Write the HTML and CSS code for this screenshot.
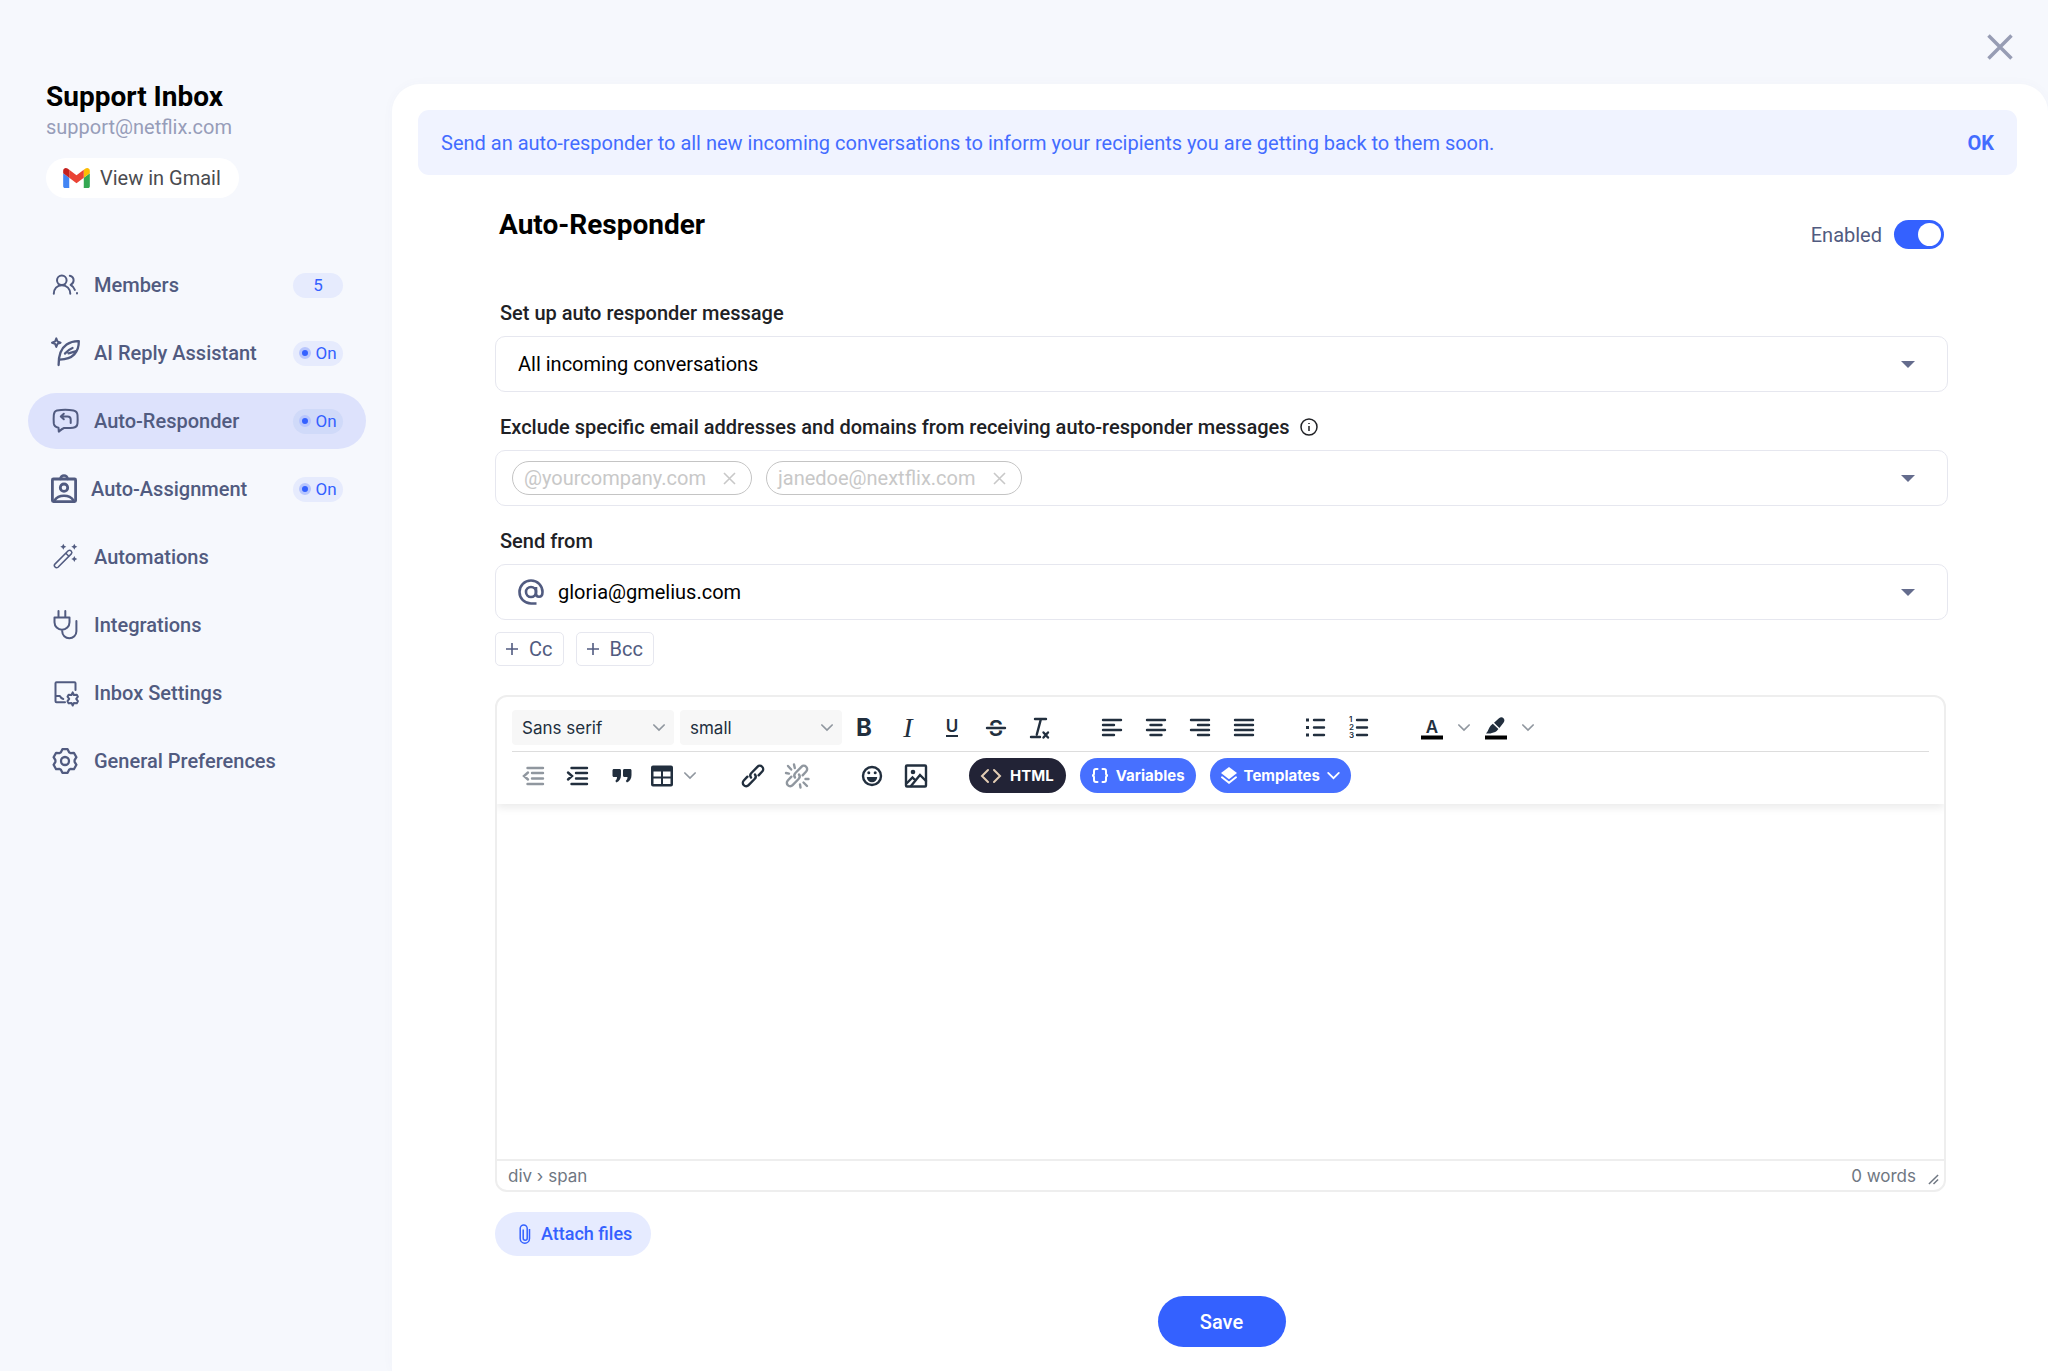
FILE: index.html
```
<!DOCTYPE html>
<html lang="en">
<head>
  <meta charset="UTF-8" />
  <title>Support Inbox - Auto-Responder</title>
  <meta name="viewport" content="width=device-width, initial-scale=1" />
  <link rel="stylesheet" href="styles.css">
</head>
<body>

  <aside class="sidebar">
    <div class="inbox">
      <h2>Support Inbox</h2>
      <p>support@netflix.com</p>
      <a href="#" class="gmail-link">
        <svg width="27" height="20" viewBox="52 42 88 66">
          <path fill="#4285f4" d="M58 108h14V74L52 59v43c0 3.32 2.69 6 6 6"/>
          <path fill="#34a853" d="M120 108h14c3.32 0 6-2.69 6-6V59l-20 15"/>
          <path fill="#fbbc04" d="M120 48v26l20-15v-8c0-7.42-8.47-11.65-14.4-7.2"/>
          <path fill="#ea4335" d="M72 74V48l24 18 24-18v26L96 92"/>
          <path fill="#c5221f" d="M52 51v8l20 15V48l-5.6-4.2c-5.94-4.45-14.4-.22-14.4 7.2"/>
        </svg>
        View in Gmail
      </a>
    </div>

    <nav class="menu">
      <a href="#" class="menu-item">
        <svg class="icon" width="28" height="28" viewBox="0 0 28 28">
          <circle cx="10.8" cy="9.3" r="4.8"/>
          <path d="M2.8 22.8c0-5 3.2-8.6 8.1-8.6s8.4 3.6 8.4 8.6M18.8 4.8c2.500.6 3.800 2.300 3.800 4.500 0 2.200-1.200 3.800-3 4.600 2.300 1.300 3.700 2.800 4.300 5M26 22v.6"/>
        </svg>
        <span>Members</span>
        <span class="badge">5</span>
      </a>
      <a href="#" class="menu-item">
        <svg class="icon" width="28" height="28" viewBox="0 0 28 28">
          <path d="M5.300-.6l1.200 3.100L9.600 3.700 6.500 4.900 5.300 8 4.100 4.900 1 3.700l3.100-1.200z"/>
          <path stroke-width="2.300" d="M7.600 26c-.1-9.500 2.200-16.500 8-20.500 3.700-2.500 8-3.600 12.200-3.400.1 4.800-1 9.700-4.500 13.300-3.500 3.700-8.500 5-14.700 5.200M14 14.500c2-2.500 4.300-4.200 7.500-5.500M17.500 14.300l7-2"/>
        </svg>
        <span>AI Reply Assistant</span>
        <span class="badge"><i class="dot"></i>On</span>
      </a>
      <a href="#" class="menu-item active">
        <svg class="icon" width="28" height="28" viewBox="0 0 28 28">
          <path d="M6 3.400c4.500-.8 12-.8 16.500 0 2.700.6 3.800 2 4 4.600.2 3 .2 6 0 8.400-.2 2.800-1.700 4-4.500 4.300-3 .4-6 .4-9 .3-2 .8-3.300 2-5.200 3.700l-.3-4c-2.800-.4-4.400-1.500-4.700-4.300-.2-3-.2-6 0-8.400C3 5.400 3.700 4 6 3.400z"/>
          <path d="M12.800 6.700l-3 2.800 3 2.800M10 9.500h6.500c2 0 3.200 1 3.200 3v3.400"/>
        </svg>
        <span>Auto-Responder</span>
        <span class="badge"><i class="dot"></i>On</span>
      </a>
      <a href="#" class="menu-item">
        <svg class="icon" width="25" height="28" viewBox="0 0 25 28">
          <rect x="1.400" y="4" width="23.200" height="22.600" rx="1" stroke-width="2.800"/>
          <path d="M9.500 4a3.500 3.500 0 0 1 7 0" stroke-width="2.600"/>
          <circle cx="13" cy="12.700" r="3.700" stroke-width="2.800"/>
          <path d="M3.500 25.500c2-3.200 5.500-4.800 9.500-4.800s7.500 1.600 9.500 4.800" stroke-width="2.600"/>
        </svg>
        <span>Auto-Assignment</span>
        <span class="badge"><i class="dot"></i>On</span>
      </a>
      <a href="#" class="menu-item">
        <svg class="icon thin" width="28" height="28" viewBox="0 0 28 28">
          <path d="M3.900 21.100 17.200 7.800a2.200 2.200 0 0 1 3.100 3.100L7 24.200a2.200 2.200 0 0 1-3.100-3.100zM14.800 10.200l3.100 3.100"/>
          <path class="fill" d="M12.300.7l1 2 2 1-2 1-1 2-1-2-2-1 2-1zM23.300.7l1 2 2 1-2 1-1 2-1-2-2-1 2-1zM23.300 13l1 2 2 1-2 1-1 2-1-2-2-1 2-1z"/>
        </svg>
        <span>Automations</span>
      </a>
      <a href="#" class="menu-item">
        <svg class="icon" width="28" height="28" viewBox="0 0 28 28">
          <path d="M7.500 0v6M14.300 0v6M3.500 6.500h15v4.700a7.500 7.500 0 0 1-15 0zM11.200 19v1.200a7.100 7.100 0 0 0 14.200 0V10"/>
        </svg>
        <span>Integrations</span>
      </a>
      <a href="#" class="menu-item">
        <svg class="icon" width="28" height="28" viewBox="0 0 28 28">
          <path d="M24.500 11V4.300a1 1 0 0 0-1-1H5.500a1 1 0 0 0-1 1v18a1 1 0 0 0 1 1H14M4.500 17h4.300c.8 1.600 2 2.600 3.500 3"/>
          <path d="M21.700 13.400l1.200 2.600 2.900-.3 1.100 2-1.700 2.200 1.700 2.300-1.100 2-2.900-.3-1.200 2.600-1.200-2.600-2.900.3-1.100-2 1.700-2.300-1.700-2.200 1.100-2 2.900.3z"/>
        </svg>
        <span>Inbox Settings</span>
      </a>
      <a href="#" class="menu-item">
        <svg class="icon" width="28" height="28" viewBox="0 0 28 28">
          <path stroke-width="2.300" d="M11.400 2.200h5.200l1.500 3 1.400.9 3.400-.3 2.500 4.400-1.800 2.900v1.800l1.800 2.900-2.500 4.400-3.400-.3-1.400.9-1.500 3h-5.200l-1.500-3-1.400-.9-3.400.3-2.500-4.400 1.800-2.900v-1.800l-1.800-2.900 2.500-4.400 3.400.3 1.400-.9z"/>
          <circle cx="14" cy="14" r="4" stroke-width="2.300"/>
        </svg>
        <span>General Preferences</span>
      </a>
    </nav>
  </aside>

  <main class="main">
    <div class="topbar">
      <button class="close" aria-label="Close">
        <svg width="26" height="26" viewBox="0 0 26 26"><path d="M1.500 1.500l23 23M24.500 1.500l-23 23"/></svg>
      </button>
    </div>

    <section class="panel">
      <div class="banner">
        <p>Send an auto-responder to all new incoming conversations to inform your recipients you are getting back to them soon.</p>
        <button>OK</button>
      </div>

      <form class="content">
        <div class="heading">
          <h1>Auto-Responder</h1>
          <label class="switch">Enabled <input type="checkbox" role="switch" checked></label>
        </div>

        <div class="field">
          <label for="scope">Set up auto responder message</label>
          <div class="box">
            <select id="scope"><option>All incoming conversations</option></select>
            <svg class="arrow" width="14" height="7" viewBox="0 0 14 7"><path d="M0 0h14L7 7z"/></svg>
          </div>
        </div>

        <div class="field">
          <label for="exclude">Exclude specific email addresses and domains from receiving auto-responder messages
            <svg class="info" width="18" height="18" viewBox="0 0 18 18"><circle cx="9" cy="9" r="8"/><path d="M9 8v5M9 5v1"/></svg>
          </label>
          <div class="box chips">
            <span class="chip">@yourcompany.com
              <button type="button" aria-label="Remove @yourcompany.com"><svg width="13" height="13" viewBox="0 0 13 13"><path d="M1 1l11 11M12 1L1 12"/></svg></button>
            </span>
            <span class="chip">janedoe@nextflix.com
              <button type="button" aria-label="Remove janedoe@nextflix.com"><svg width="13" height="13" viewBox="0 0 13 13"><path d="M1 1l11 11M12 1L1 12"/></svg></button>
            </span>
            <input type="text" id="exclude">
            <svg class="arrow" width="14" height="7" viewBox="0 0 14 7"><path d="M0 0h14L7 7z"/></svg>
          </div>
        </div>

        <div class="field">
          <label for="from">Send from</label>
          <div class="box">
            <svg class="at" width="26" height="28" viewBox="0 0 26 28">
              <circle cx="13" cy="14" r="5"/><path d="M18 9v6.500c0 2 1.200 3.300 3 3.300s3.500-1.500 3.500-4.800C24.500 7.500 19.500 2.500 13 2.500S1.500 7.500 1.500 14 6.500 25.500 13 25.500h5.500"/>
            </svg>
            <select id="from" class="with-icon"><option>gloria@gmelius.com</option></select>
            <svg class="arrow" width="14" height="7" viewBox="0 0 14 7"><path d="M0 0h14L7 7z"/></svg>
          </div>
        </div>

        <div class="copies">
          <button type="button"><svg width="12" height="12" viewBox="0 0 12 12"><path d="M6 0v12M0 6h12"/></svg>Cc</button>
          <button type="button"><svg width="12" height="12" viewBox="0 0 12 12"><path d="M6 0v12M0 6h12"/></svg>Bcc</button>
        </div>

        <div class="editor">
          <div class="toolbar">
            <div class="tools">
              <div class="group fonts">
                <div class="pick">
                  <select aria-label="Font"><option>Sans serif</option></select>
                  <svg class="chev" width="12" height="8" viewBox="0 0 14 9"><path d="M1 1l6 6 6-6"/></svg>
                </div>
                <div class="pick">
                  <select aria-label="Size"><option>small</option></select>
                  <svg class="chev" width="12" height="8" viewBox="0 0 14 9"><path d="M1 1l6 6 6-6"/></svg>
                </div>
              </div>
              <div class="group">
                <button type="button" class="tool bold">B</button>
                <button type="button" class="tool italic">I</button>
                <button type="button" class="tool under"><span>U</span></button>
                <button type="button" class="tool" aria-label="Strikethrough">
                  <svg width="30" height="30" viewBox="0 0 30 30"><text x="15" y="23" font-size="22" text-anchor="middle">S</text><path class="gap" d="M5 15h20"/><path d="M6 15h18"/></svg>
                </button>
                <button type="button" class="tool" aria-label="Clear formatting">
                  <svg width="30" height="30" viewBox="0 0 30 30"><path d="M10 6h11M15.800 6.500l-4 15M6 24h9M18.500 19.500l4.500 5M23 19.500l-4.500 5"/></svg>
                </button>
              </div>
              <div class="group">
                <button type="button" class="tool" aria-label="Align left"><svg width="30" height="30" viewBox="0 0 30 30"><path d="M6 7h18M6 12h11M6 17h18M6 22h11"/></svg></button>
                <button type="button" class="tool" aria-label="Align center"><svg width="30" height="30" viewBox="0 0 30 30"><path d="M6 7h18M9.500 12h11M6 17h18M9.500 22h11"/></svg></button>
                <button type="button" class="tool" aria-label="Align right"><svg width="30" height="30" viewBox="0 0 30 30"><path d="M6 7h18M13 12h11M6 17h18M13 22h11"/></svg></button>
                <button type="button" class="tool" aria-label="Justify"><svg width="30" height="30" viewBox="0 0 30 30"><path d="M6 7h18M6 12h18M6 17h18M6 22h18"/></svg></button>
              </div>
              <div class="group">
                <button type="button" class="tool" aria-label="Bullet list"><svg width="30" height="30" viewBox="0 0 30 30"><path d="M13 7h10M13 14.500h10M13 22h10"/><path class="fill" d="M5 5.500h3v3H5zM5 13h3v3H5zM5 20.500h3v3H5z"/></svg></button>
                <button type="button" class="tool" aria-label="Numbered list">
                  <svg width="30" height="30" viewBox="0 0 30 30"><path d="M12 7h10M12 14.500h10M12 22h10"/><g font-size="8"><text x="4" y="9">1</text><text x="4" y="17">2</text><text x="4" y="25">3</text></g></svg>
                </button>
              </div>
              <div class="group">
                <button type="button" class="tool" aria-label="Text color">
                  <svg width="30" height="30" viewBox="0 0 30 30"><text x="15" y="20" font-size="17" text-anchor="middle">A</text><path class="swatch" d="M4 24.500h22"/></svg>
                </button>
                <button type="button" class="more" aria-label="Text colors"><svg class="chev" width="12" height="8" viewBox="0 0 14 9"><path d="M1 1l6 6 6-6"/></svg></button>
                <button type="button" class="tool" aria-label="Background color">
                  <svg width="30" height="30" viewBox="0 0 30 30"><path class="fill" d="M5 20.500c2.500-2.500 2.800-6 4.800-8l2-1.700 5.600 5.300-1.700 2c-1.800 1.800-4.500 1.500-6.200 2.400zM13 9.700l5-4.400c1.500-1.300 3.300-1.300 4.500-.1s1.200 3 0 4.500L18.400 15z"/><path class="swatch" d="M4 24.500h22"/></svg>
                </button>
                <button type="button" class="more" aria-label="Background colors"><svg class="chev" width="12" height="8" viewBox="0 0 14 9"><path d="M1 1l6 6 6-6"/></svg></button>
              </div>
            </div>

            <div class="tools second">
              <div class="group">
                <button type="button" class="tool" disabled aria-label="Outdent"><svg width="30" height="30" viewBox="0 0 30 30"><path d="M8.500 7h15.500M13 12h11M13 17.500h11M8.500 23h15.500M9 11.500l-4 3.500 4 3.500"/></svg></button>
                <button type="button" class="tool" aria-label="Indent"><svg width="30" height="30" viewBox="0 0 30 30"><path d="M8.500 7h15.500M13 12h11M13 17.500h11M8.500 23h15.500M5 11.500l4 3.500-4 3.500"/></svg></button>
                <button type="button" class="tool" aria-label="Blockquote"><svg width="30" height="30" viewBox="0 0 30 30"><path class="fill" d="M7 8h5.500c1 0 1.500.6 1.500 1.500V14c0 3.500-1.500 6-4.500 7.500L8.300 20c1.200-1.200 1.700-2.300 1.700-4H7c-1 0-1.500-.6-1.500-1.500v-5C5.500 8.600 6 8 7 8zM17.500 8H23c1 0 1.500.6 1.500 1.500V14c0 3.500-1.500 6-4.500 7.500L18.800 20c1.200-1.200 1.700-2.300 1.700-4h-3c-1 0-1.500-.6-1.500-1.500v-5c0-.9.500-1.500 1.500-1.500z"/></svg></button>
                <button type="button" class="tool table" aria-label="Table"><svg width="30" height="30" viewBox="0 0 30 30"><path class="fill" fill-rule="evenodd" d="M6 4.500h18a2 2 0 0 1 2 2v17a2 2 0 0 1-2 2H6a2 2 0 0 1-2-2v-17a2 2 0 0 1 2-2zm.5 6v5H14v-5zm9.500 0v5h7.500v-5zM6.500 17.500v5.500H14v-5.500zm9.500 0v5.500h7.500v-5.500z"/></svg></button>
                <button type="button" class="more" aria-label="Table options"><svg class="chev" width="12" height="8" viewBox="0 0 14 9"><path d="M1 1l6 6 6-6"/></svg></button>
              </div>
              <div class="group">
                <button type="button" class="tool" aria-label="Link"><svg width="30" height="30" viewBox="0 0 30 30"><path d="M13 16.500a3.500 3.500 0 0 1 .4-4.500l6-6.200a3.300 3.300 0 0 1 4.800 4.700l-3.600 3.800M17 13.500a3.500 3.500 0 0 1-.4 4.500l-6 6.200a3.300 3.300 0 0 1-4.800-4.700l3.600-3.800"/></svg></button>
                <button type="button" class="tool" disabled aria-label="Remove link"><svg width="30" height="30" viewBox="0 0 30 30"><path d="M13 16.500a3.500 3.500 0 0 1 .4-4.500l6-6.200a3.300 3.300 0 0 1 4.800 4.700l-3.600 3.800M17 13.500a3.500 3.500 0 0 1-.4 4.500l-6 6.200a3.300 3.300 0 0 1-4.800-4.700l3.600-3.800M12 3.500l.8 3.500M6 5l3.200 3.500M4 12l3 .6M18.500 26.500L18 23.500M25 25l-3.500-3.500M26.500 18h-3"/></svg></button>
              </div>
              <div class="group">
                <button type="button" class="tool" aria-label="Emoji"><svg width="30" height="30" viewBox="0 0 30 30"><circle cx="15" cy="15" r="9"/><path class="fill" d="M9.800 16h10.400a5.200 5.200 0 0 1-10.400 0z"/><circle class="fill" cx="11.800" cy="11.800" r="1.500"/><circle class="fill" cx="18.200" cy="11.800" r="1.500"/></svg></button>
                <button type="button" class="tool" aria-label="Image"><svg width="30" height="30" viewBox="0 0 30 30"><rect x="5" y="4.500" width="20" height="21" rx="1"/><circle class="fill" cx="12" cy="11" r="2.300"/><path d="M6 22l5.500-5.500 3 3 4.500-5.500 6 6M10 25l4.500-5.500"/></svg></button>
              </div>
              <div class="group pills">
                <button type="button" class="pill dark"><svg width="20" height="14" viewBox="0 0 20 14"><path d="M7 1L1 7l6 6M13 1l6 6-6 6"/></svg>HTML</button>
                <button type="button" class="pill"><svg width="18" height="15" viewBox="0 0 18 15"><path d="M6.500 1H5C3.500 1 3 1.800 3 3v2.500c0 1.200-.8 2-2 2 1.200 0 2 .8 2 2V12c0 1.200.5 2 2 2h1.500M11.500 1H13c1.500 0 2 .8 2 2v2.500c0 1.200.8 2 2 2-1.200 0-2 .8-2 2V12c0 1.200-.5 2-2 2h-1.500"/></svg>Variables</button>
                <button type="button" class="pill"><svg width="16" height="17" viewBox="0 0 16 17"><path class="fill" d="M8 0l8 6-8 6.200L0 6z"/><path d="M1 10.300l7 5.400 7-5.400"/></svg>Templates<svg width="13" height="8" viewBox="0 0 14 9"><path d="M1 1l6 6 6-6"/></svg></button>
              </div>
            </div>
          </div>

          <textarea aria-label="Message"></textarea>

          <div class="status">
            <span>div › span</span>
            <span>0 words</span>
            <svg width="11" height="11" viewBox="0 0 12 12"><path d="M1 11L11 1M6 11l5-5"/></svg>
          </div>
        </div>

        <button type="button" class="attach">
          <svg width="12" height="20" viewBox="0 0 12 20"><path d="M10.500 5v9.500a4.600 4.600 0 0 1-9.300 0V4.500a3.500 3.500 0 0 1 7 0v9.700a2 2 0 0 1-4 0V5.500"/></svg>
          Attach files
        </button>

        <button type="submit" class="save">Save</button>
      </form>
    </section>
  </main>

</body>
</html>
```
FILE: styles.css
```
* {
  box-sizing: border-box;
}
body {
  display: grid;
  grid-template-columns: 392px 1fr;
  min-height: 100vh;
  margin: 0;
  background: #f6f8fd;
  font-family: Roboto, sans-serif;
  font-size: 20px;
  line-height: 24px;
  color: #515b80;
}
h1, h2, p {
  margin: 0;
}
h1, h2 {
  font-size: 28px;
  line-height: 32px;
  font-weight: 700;
  color: #000;
}
a {
  color: inherit;
  text-decoration: none;
}
button, select, input, textarea {
  font: inherit;
  color: inherit;
  background: none;
  border: none;
  padding: 0;
  margin: 0;
}
button {
  cursor: pointer;
}
select {
  appearance: none;
}
svg {
  flex: none;
  fill: none;
  stroke: currentColor;
  stroke-width: 2;
  overflow: visible;
}

/* sidebar */
.sidebar {
  padding: 81px 26px 24px 28px;
}
.inbox {
  margin-left: 18px;
}
.inbox p {
  margin-top: 2px;
  color: #979db9;
}
.gmail-link {
  display: inline-flex;
  align-items: center;
  gap: 10px;
  height: 40px;
  margin-top: 19px;
  padding: 0 18px 0 17px;
  border-radius: 20px;
  background: #fff;
  color: #4a4b50;
}
.gmail-link svg {
  stroke: none;
}
.menu {
  display: flex;
  flex-direction: column;
  gap: 12px;
  margin-top: 59px;
}
.menu-item {
  display: flex;
  align-items: center;
  gap: 15px;
  height: 56px;
  padding: 0 23px;
  border-radius: 28px;
  font-weight: 500;
}
.menu-item.active {
  background: #dde2fc;
}
.icon {
  stroke-linecap: round;
  stroke-linejoin: round;
}
.icon.thin {
  stroke-width: 1.5;
}
.icon .fill {
  fill: currentColor;
  stroke: none;
}
.badge {
  display: flex;
  align-items: center;
  justify-content: center;
  gap: 4px;
  width: 50px;
  height: 25px;
  margin-left: auto;
  border-radius: 13px;
  background: #e6ebfd;
  color: #3461ff;
  font-size: 17px;
  font-weight: 400;
}
.active .badge {
  background: #d0daf9;
}
.dot {
  width: 12px;
  height: 12px;
  border: 3px solid #b8c6fd;
  border-radius: 50%;
  background: #3461ff;
}

/* main area */
.main {
  display: flex;
  flex-direction: column;
}
.topbar {
  display: flex;
  justify-content: flex-end;
  padding: 34px 35px 24px;
}
.close {
  display: flex;
  color: #979db4;
}
.close svg {
  stroke-width: 3.5;
}
.panel {
  flex: 1;
  padding: 26px 31px 24px 26px;
  border-radius: 28px 28px 0 0;
  background: #fff;
  box-shadow: 0 0 12px rgba(80, 90, 130, 0.03);
}
.banner {
  display: flex;
  align-items: center;
  justify-content: space-between;
  min-height: 65px;
  padding: 0 23px;
  border-radius: 11px;
  background: #f0f3ff;
  color: #436cff;
}
.banner button {
  font-weight: 700;
}
.content {
  display: flex;
  flex-direction: column;
  padding: 34px 69px 0 77px;
}
.heading {
  display: flex;
  justify-content: space-between;
  height: 40px;
  margin-bottom: 52px;
  padding: 0 4px;
}
.switch {
  display: flex;
  align-items: center;
  align-self: flex-end;
  gap: 12px;
}
.switch input {
  appearance: none;
  display: flex;
  justify-content: flex-end;
  width: 50px;
  height: 29px;
  padding: 3px;
  border-radius: 15px;
  background: #3461ff;
}
.switch input::before {
  content: "";
  width: 23px;
  height: 23px;
  border-radius: 50%;
  background: #fff;
}
.switch input:not(:checked) {
  justify-content: flex-start;
  background: #c5cad9;
}

.field {
  margin-bottom: 23px;
}
.field label {
  display: flex;
  align-items: center;
  gap: 10px;
  margin: 0 0 11px 5px;
  font-weight: 500;
  color: #202125;
}
.info {
  stroke-width: 1.5;
}
.box {
  display: flex;
  align-items: center;
  height: 56px;
  padding: 0 32px 0 22px;
  border: 1px solid #e6e7ef;
  border-radius: 10px;
}
.box select, .box input {
  flex: 1;
  min-width: 0;
  height: 100%;
  color: #000;
  outline: none;
}
.box .with-icon {
  padding-left: 14px;
}
.at {
  stroke-width: 2.6;
}
.arrow {
  fill: #646c8d;
  stroke: none;
}
.chips {
  gap: 14px;
  padding-left: 16px;
}
.chip {
  display: flex;
  align-items: center;
  gap: 17px;
  height: 34px;
  padding: 0 15px 0 11px;
  border: 1px solid #c4c4c4;
  border-radius: 17px;
  color: #c8c8c8;
}
.chip button {
  display: flex;
}
.chip svg, .copies svg {
  stroke-width: 1.6;
}
.copies {
  display: flex;
  gap: 12px;
  margin: -11px 0 29px;
}
.copies button {
  display: flex;
  align-items: center;
  gap: 11px;
  height: 34px;
  padding: 0 10px;
  border: 1px solid #e6e7ef;
  border-radius: 5px;
}

/* editor */
.editor {
  margin-right: 2px;
  border: 2px solid #eee;
  border-radius: 12px;
  font-family: Inter, sans-serif;
  font-size: 17px;
}
.toolbar {
  padding: 13px 15px 11px;
  color: #222f3e;
  box-shadow: 0 4px 8px rgba(0, 0, 0, 0.08);
  clip-path: inset(0 0 -14px 0);
}
.tools {
  display: flex;
  flex-wrap: wrap;
  gap: 28px;
}
.tools.second {
  gap: 31px;
  margin-top: 6px;
  padding-top: 6px;
  border-top: 1px solid #ddd;
}
.group {
  display: flex;
  align-items: center;
  height: 35px;
}
.fonts {
  gap: 6px;
  margin-right: -28px;
}
.pick {
  display: flex;
  align-items: center;
  width: 162px;
  height: 35px;
  padding-right: 9px;
  border-radius: 4px;
  background: #f7f7f7;
}
.pick select {
  flex: 1;
  min-width: 0;
  padding-left: 10px;
}
.chev {
  color: #90979f;
  stroke-linecap: round;
}
.tool {
  display: flex;
  align-items: center;
  justify-content: center;
  width: 44px;
  height: 35px;
}
.tool svg {
  stroke-width: 2.4;
  stroke-linecap: round;
}
.tool text {
  fill: currentColor;
  stroke: none;
  font-weight: 600;
}
.tool .fill {
  fill: currentColor;
  stroke: none;
}
.tool .swatch {
  stroke: #000;
  stroke-width: 4;
  stroke-linecap: butt;
}
.tool .gap {
  stroke: #fff;
  stroke-width: 5;
  stroke-linecap: butt;
}
.tool:disabled {
  color: #90979f;
}
.tool.table {
  width: 36px;
}
.bold {
  font-size: 24px;
  font-weight: 700;
}
.italic {
  font-family: "Liberation Serif", serif;
  font-size: 28px;
  font-style: italic;
}
.under {
  font-weight: 600;
}
.under span {
  line-height: 17px;
  border-bottom: 2px solid;
}
.more {
  display: flex;
  align-items: center;
  justify-content: center;
  width: 20px;
  height: 35px;
}
.pills {
  gap: 14px;
}
.pill {
  display: flex;
  align-items: center;
  gap: 7px;
  height: 35px;
  padding: 0 11px;
  border-radius: 18px;
  background: #4770ff;
  color: #fff;
  font-size: 15px;
  font-weight: 700;
}
.pill.dark {
  gap: 9px;
  padding: 0 12px;
  background: #222336;
}
.pill.dark svg {
  color: #e3cdb4;
}
.pill svg {
  stroke-linecap: round;
}
.pill .fill {
  fill: #fff;
  stroke: none;
}
.editor textarea {
  display: block;
  width: 100%;
  height: 355px;
  padding: 16px;
  resize: none;
  outline: none;
}
.status {
  display: flex;
  align-items: center;
  gap: 12px;
  height: 31px;
  padding: 0 5px 0 11px;
  border-top: 2px solid #eee;
  color: #6f7782;
}
.status span:first-child {
  margin-right: auto;
}
.status svg {
  align-self: flex-end;
  margin-bottom: 5px;
  stroke-width: 1.6;
}

.attach {
  display: flex;
  align-items: center;
  align-self: flex-start;
  gap: 10px;
  height: 44px;
  margin-top: 20px;
  padding: 0 19px 0 24px;
  border-radius: 22px;
  background: #e6ebff;
  color: #3461ff;
  font-size: 18px;
  font-weight: 500;
}
.attach svg {
  stroke-width: 1.5;
}
.save {
  align-self: center;
  width: 128px;
  height: 51px;
  margin-top: 40px;
  border-radius: 26px;
  background: #3461ff;
  color: #fff;
  font-weight: 500;
}
```
